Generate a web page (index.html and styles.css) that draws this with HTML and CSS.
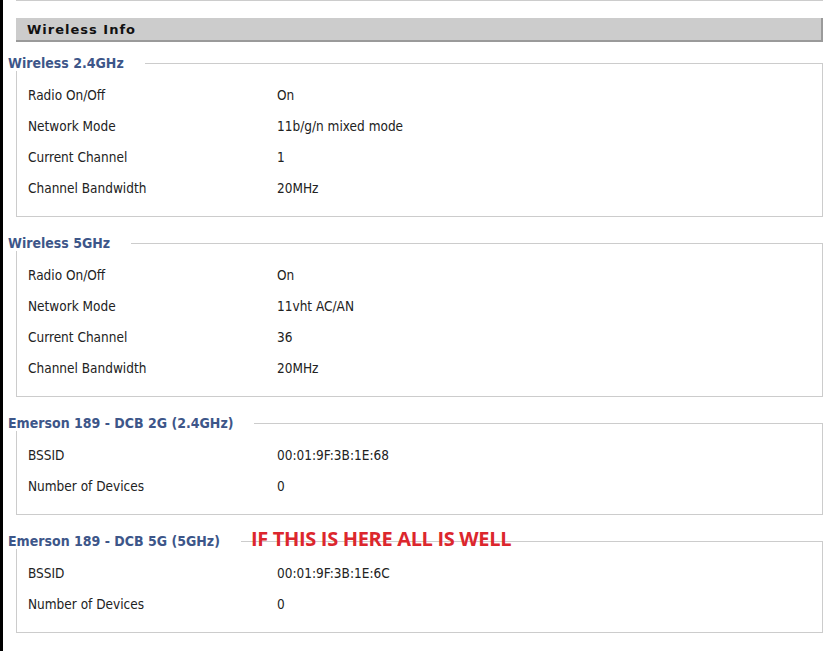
FILE: index.html
```html
<!DOCTYPE html>
<html>
<head>
<meta charset="utf-8">
<title>Wireless Info</title>
<link rel="stylesheet" href="styles.css">
</head>
<body>
<div class="frame">
  <div class="page">
    <div class="topline"></div>
    <div class="section-head">Wireless Info</div>

    <fieldset class="group">
      <legend>Wireless 2.4GHz</legend>
      <div class="rows">
        <div class="row"><span class="label">Radio On/Off</span><span class="value">On</span></div>
        <div class="row"><span class="label">Network Mode</span><span class="value">11b/g/n mixed mode</span></div>
        <div class="row"><span class="label">Current Channel</span><span class="value">1</span></div>
        <div class="row"><span class="label">Channel Bandwidth</span><span class="value">20MHz</span></div>
      </div>
    </fieldset>

    <fieldset class="group">
      <legend>Wireless 5GHz</legend>
      <div class="rows">
        <div class="row"><span class="label">Radio On/Off</span><span class="value">On</span></div>
        <div class="row"><span class="label">Network Mode</span><span class="value">11vht AC/AN</span></div>
        <div class="row"><span class="label">Current Channel</span><span class="value">36</span></div>
        <div class="row"><span class="label">Channel Bandwidth</span><span class="value">20MHz</span></div>
      </div>
    </fieldset>

    <fieldset class="group">
      <legend>Emerson 189 - DCB 2G (2.4GHz)</legend>
      <div class="rows">
        <div class="row"><span class="label">BSSID</span><span class="value">00:01:9F:3B:1E:68</span></div>
        <div class="row"><span class="label">Number of Devices</span><span class="value">0</span></div>
      </div>
    </fieldset>

    <fieldset class="group annotated">
      <legend>Emerson 189 - DCB 5G (5GHz)</legend>
      <span class="note">IF THIS IS HERE ALL IS WELL</span>
      <div class="rows">
        <div class="row"><span class="label">BSSID</span><span class="value">00:01:9F:3B:1E:6C</span></div>
        <div class="row"><span class="label">Number of Devices</span><span class="value">0</span></div>
      </div>
    </fieldset>
  </div>
</div>
</body>
</html>
```

FILE: styles.css
```css
html, body {
  margin: 0;
  padding: 0;
  background: #ffffff;
}

body {
  font-family: "DejaVu Sans Condensed", "DejaVu Sans", Tahoma, sans-serif;
  font-stretch: condensed;
  font-size: 13.5px;
  color: #222222;
}

.frame {
  min-height: 651px;
  border-left: 3px solid #000000;
  box-sizing: border-box;
  padding-left: 13px;
}

.page {
  width: 807px;
}

.topline {
  border-top: 1px solid #cccccc;
  height: 0;
}

.section-head {
  margin-top: 17px;
  height: 22px;
  line-height: 24px;
  background: #cccccc;
  border-right: 2px solid #9a9a9a;
  border-bottom: 2px solid #9a9a9a;
  padding-left: 11px;
  font-family: "DejaVu Sans", Verdana, sans-serif;
  font-stretch: normal;
  font-weight: bold;
  font-size: 13px;
  letter-spacing: 1px;
  color: #111111;
}

.group {
  margin: 18px 0 0 0;
  padding: 8px 0 13px 11px;
  border: 1px solid #cccccc;
  min-inline-size: 0;
  position: relative;
}

.group:first-of-type {
  margin-top: 13px;
}

.group legend {
  margin-left: -20px;
  padding: 0 21px 0 0;
  background: #ffffff;
  position: relative;
  font-weight: bold;
  font-size: 14px;
  line-height: 16px;
  color: #3d5689;
}

.rows {
  display: flex;
  flex-direction: column;
}

.row {
  display: flex;
  height: 31px;
  align-items: center;
}

.label {
  width: 249px;
  flex: none;
}

.value {
  flex: 1;
}

.note {
  position: absolute;
  left: 234px;
  top: -23px;
  font-family: "Open Sans", sans-serif;
  font-stretch: normal;
  font-weight: bold;
  font-size: 20px;
  line-height: 26px;
  color: #dc262d;
  letter-spacing: -0.33px;
}
```
